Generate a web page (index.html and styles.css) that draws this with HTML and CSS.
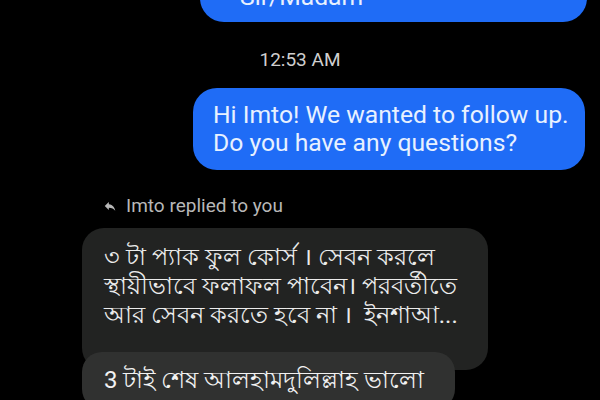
FILE: index.html
```html
<!DOCTYPE html>
<html>
<head>
<meta charset="utf-8">
<link rel="stylesheet" href="styles.css">
</head>
<body>
<div class="chat">
  <div class="row out">
    <div class="bubble blue first">Sir/Madam</div>
  </div>
  <div class="time">12:53 AM</div>
  <div class="row out">
    <div class="bubble blue second">Hi Imto! We wanted to follow up.<br>Do you have any questions?</div>
  </div>
  <div class="reply-label">
    <svg class="reply-icon" viewBox="0 0 24 24" width="14" height="14"><path d="M10 9V5l-7 7 7 7v-4.1c5 0 8.5 1.6 11 5.1-1-5-4-10-11-11z" fill="#b8b8b8"/></svg>
    <span>Imto replied to you</span>
  </div>
  <div class="in-group">
    <div class="bubble quoted">৩ টা প্যাক ফুল কোর্স । সেবন করলে<br>স্থায়ীভাবে ফলাফল পাবেন। পরবর্তীতে<br>আর সেবন করতে হবে না ।&nbsp; ইনশাআ...</div>
    <div class="bubble gray">3 টাই শেষ আলহামদুলিল্লাহ ভালো</div>
  </div>
</div>
</body>
</html>
```
FILE: styles.css
```css
html, body {
  margin: 0;
  padding: 0;
  background: #000;
  width: 600px;
  height: 400px;
  overflow: hidden;
}
.chat {
  display: flex;
  flex-direction: column;
  font-family: Roboto, "Noto Sans", sans-serif;
}
.row.out {
  display: flex;
  justify-content: flex-end;
}
.bubble {
  box-sizing: border-box;
  font-size: 24px;
  line-height: 28px;
}
.blue {
  background: #1f6cf6;
  color: #e8f1ff;
  border-radius: 24px;
  font-size: 24.7px;
}
.first {
  width: 387px;
  height: 60px;
  margin-right: 13px;
  margin-top: -38px;
  padding: 21px 20px 11px 40px;
}
.second {
  width: 392px;
  margin-right: 15px;
  margin-top: 17px;
  padding: 13px 14px 13px 20px;
}
.time {
  text-align: center;
  color: #cfcfcf;
  font-size: 19px;
  line-height: 22px;
  margin-top: 27px;
}
.reply-label {
  display: flex;
  align-items: center;
  gap: 9px;
  margin: 25px 0 0 103px;
  color: #b8b8b8;
  font-size: 19px;
  line-height: 22px;
}
.in-group {
  display: flex;
  flex-direction: column;
  margin-left: 82px;
  margin-top: 11px;
}
.quoted {
  width: 406px;
  background: #222322;
  color: #ececec;
  border-radius: 22px;
  line-height: 29px;
  padding: 15px 10px 40px 22px;
}
.gray {
  width: 373px;
  margin-top: -18px;
  background: #303130;
  color: #f2f2f2;
  border-radius: 20px;
  line-height: 29px;
  padding: 14px 10px 14px 22px;
}
```
